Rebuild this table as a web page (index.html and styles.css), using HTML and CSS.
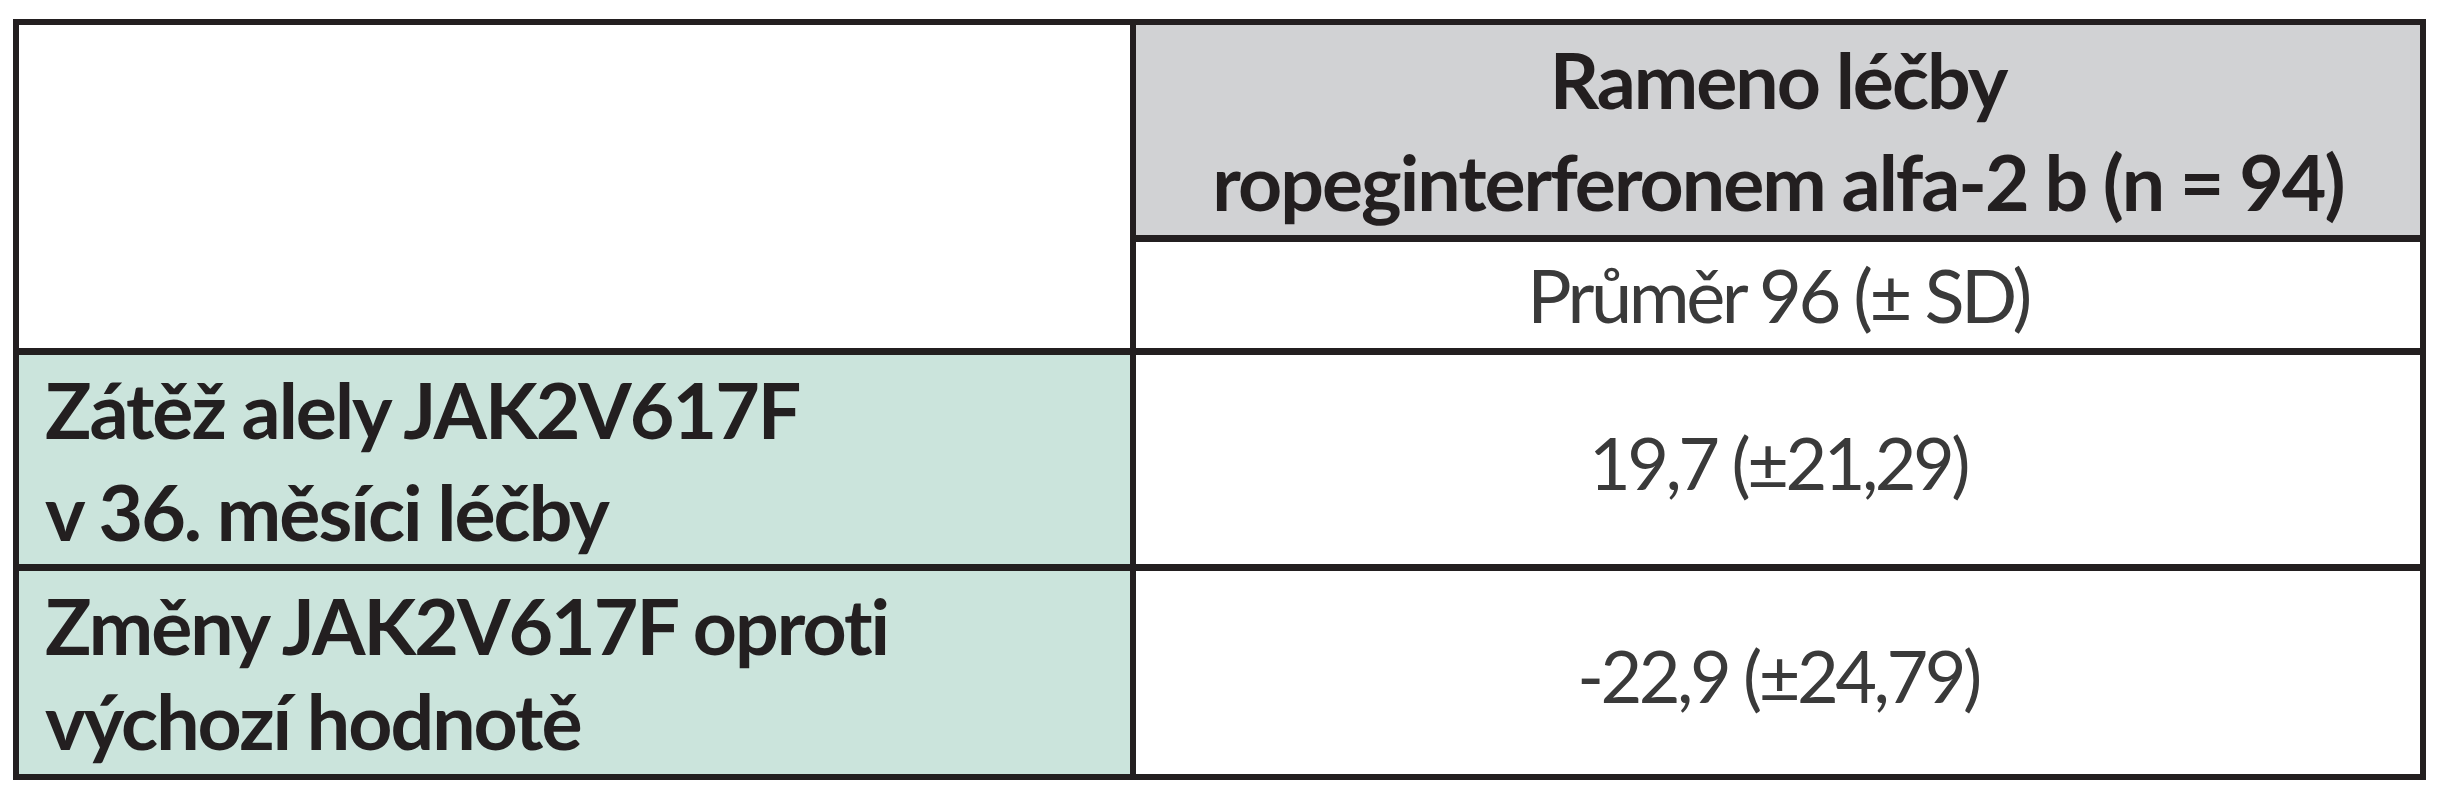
FILE: index.html
```html
<!DOCTYPE html>
<html lang="cs">
<head>
<meta charset="utf-8">
<title>JAK2V617F</title>
<link rel="stylesheet" href="styles.css">
</head>
<body>
<div class="table">
  <div class="cell corner"></div>
  <div class="cell head">Rameno léčby<br>ropeginterferonem alfa-2 b (n = 94)</div>
  <div class="cell sub">Průměr 96 (± SD)</div>
  <div class="cell label loose">Zátěž alely JAK2V617F<br>v 36. měsíci léčby</div>
  <div class="cell value">19,7 (±21,29)</div>
  <div class="cell label tight">Změny JAK2V617F oproti<br>výchozí hodnotě</div>
  <div class="cell value">-22,9 (±24,79)</div>
</div>
</body>
</html>
```
FILE: styles.css
```css
html, body {
  margin: 0;
  padding: 0;
  background: #ffffff;
}
body {
  padding: 19px 0 0 13px;
  font-family: Lato, "Liberation Sans", sans-serif;
}
.table {
  display: grid;
  grid-template-columns: 1111px 1284px;
  grid-template-rows: 210px 106px 209px 203px;
  gap: 7px 6px;
  padding: 6px;
  width: max-content;
  background: #231f20;
}
.cell {
  background: #ffffff;
  display: flex;
  flex-direction: column;
  justify-content: center;
  font-size: 77px;
  color: #231f20;
  white-space: nowrap;
}
.corner {
  grid-row: 1 / 3;
}
.head {
  background: #d1d2d4;
  font-weight: 700;
  text-align: center;
  line-height: 102px;
  letter-spacing: -2px;
}
.sub, .value {
  text-align: center;
  font-weight: 400;
  color: #3a3a3a;
  line-height: 1;
}
.sub {
  font-size: 74px;
  letter-spacing: -3.5px;
}
.value {
  font-size: 72px;
  letter-spacing: -3.5px;
  padding-top: 4px;
}
.label {
  background: #cbe4dc;
  font-weight: 700;
  padding-left: 26px;
  letter-spacing: -2px;
}
.loose {
  line-height: 102px;
}
.tight {
  line-height: 95px;
}
```
